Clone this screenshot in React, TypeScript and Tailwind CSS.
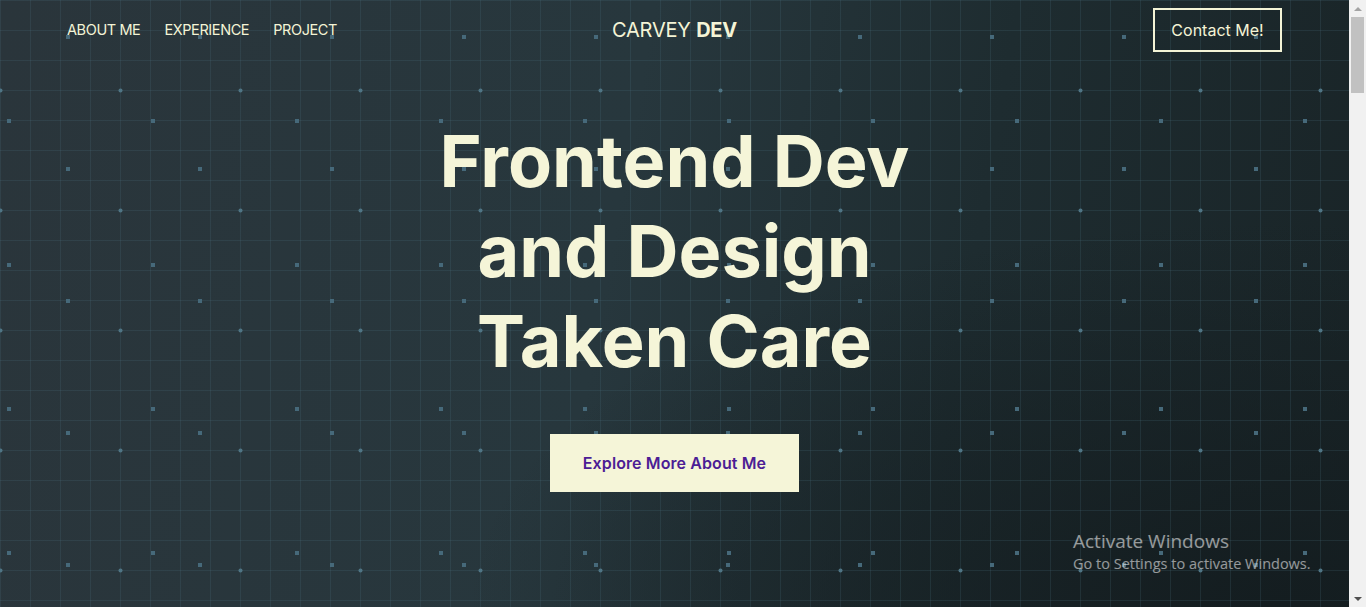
import type { ReactNode } from "react";

const links = ["About me", "Experience", "Project"];

function NavLink({ children }: { children: ReactNode }) {
  return (
    <a href="#" className="text-[14.5px] uppercase tracking-[-0.4px] text-[#f4f4d6]">
      {children}
    </a>
  );
}

function GridBackdrop() {
  return (
    <svg className="absolute inset-0 h-full w-full" aria-hidden="true">
      <defs>
        <pattern id="grid" width="30" height="30" patternUnits="userSpaceOnUse">
          <path d="M0.5 0V30M0 0.5H30" stroke="#4a7382" strokeOpacity="0.2" fill="none" />
        </pattern>
        <pattern id="dots" x="-60" y="30" width="120" height="120" patternUnits="userSpaceOnUse">
          <circle cx="60.5" cy="60.5" r="2" fill="#4f7585" />
        </pattern>
        <pattern id="squaresA" x="-63" y="49" width="144" height="144" patternUnits="userSpaceOnUse">
          <rect x="70" y="70" width="4" height="4" fill="#46697a" />
        </pattern>
        <pattern id="squaresB" x="2" y="-29" width="132" height="132" patternUnits="userSpaceOnUse">
          <rect x="64" y="64" width="4" height="4" fill="#46697a" />
        </pattern>
      </defs>
      <rect width="100%" height="100%" fill="url(#grid)" />
      <rect width="100%" height="100%" fill="url(#squaresA)" />
      <rect width="100%" height="100%" fill="url(#squaresB)" />
      <rect width="100%" height="100%" fill="url(#dots)" />
    </svg>
  );
}

// browser chrome: the page scrollbar as it shows in the screenshot
function ScrollRail() {
  return (
    <aside className="flex w-[17px] shrink-0 flex-col bg-[#f1f1f1]">
      <div className="flex h-[17px] items-center justify-center">
        <span className="h-0 w-0 border-x-4 border-b-4 border-x-transparent border-b-[#a3a3a3]" />
      </div>
      <div className="mx-[2px] h-[76px] bg-[#c1c1c1]" />
      <div className="flex-1" />
      <div className="flex h-[17px] items-center justify-center">
        <span className="h-0 w-0 border-x-4 border-t-4 border-x-transparent border-t-[#505050]" />
      </div>
    </aside>
  );
}

export default function App() {
  return (
    <div className="flex h-[607px] overflow-hidden bg-[#1c282c] font-['Inter',sans-serif]">
      <section className="relative flex-1 overflow-hidden bg-[linear-gradient(100deg,#2a353b_0%,#27373d_45%,#1e2c30_70%,#192427_100%)]">
        <div className="absolute inset-0 bg-[radial-gradient(ellipse_at_95%_100%,#141d20_0%,transparent_45%)]" />
        <GridBackdrop />

        <header className="relative grid h-[60px] grid-cols-3 items-center px-[67px]">
          <nav className="flex gap-6">
            {links.map((l) => (
              <NavLink key={l}>{l}</NavLink>
            ))}
          </nav>
          <a href="#" className="justify-self-center text-[20px] tracking-[-0.2px] text-[#f4f4d6]">
            CARVEY <span className="font-bold">DEV</span>
          </a>
          <button className="justify-self-end h-[44px] w-[129px] border-2 border-[#f4f4d6] text-[16px] text-[#f4f4d6]">
            Contact Me!
          </button>
        </header>

        <main className="relative flex flex-col items-center pt-[56px] text-center">
          <h1 className="text-[72px] font-bold leading-[90px] text-[#f5f5d8]">
            <span className="block">Frontend Dev</span>
            <span className="block">and Design</span>
            <span className="block">Taken Care</span>
          </h1>
          <button className="mt-12 h-[58px] w-[249px] bg-[#f5f5d8] text-[16px] font-semibold tracking-[0.1px] text-[#4c1d95]">
            Explore More About Me
          </button>
        </main>

        <div className="pointer-events-none absolute left-[1073px] top-[528px] font-['Open_Sans',sans-serif] text-white/55">
          <p className="text-[19px] leading-[26px]">Activate Windows</p>
          <p className="text-[14.5px] leading-[20px]">Go to Settings to activate Windows.</p>
        </div>
      </section>

      <ScrollRail />
    </div>
  );
}
